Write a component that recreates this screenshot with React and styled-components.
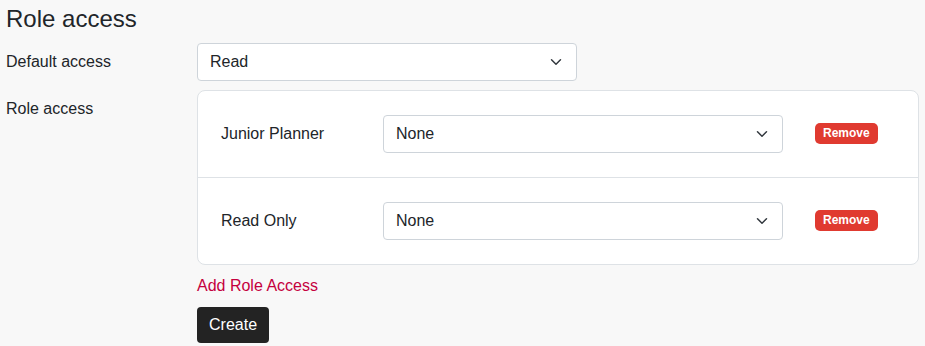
import React from 'react'
import styled, { createGlobalStyle } from 'styled-components'

const Global = createGlobalStyle`
    html, body {
        margin: 0;
        background: #f8f8f8;
    }
    body {
        font-family: "Liberation Sans", Arial, sans-serif;
        font-size: 16px;
        line-height: 1.5;
        color: #212529;
    }
`

const Page = styled.div`
    padding: 5px 7px 0 6px;
`

const Title = styled.h2`
    margin: 0 0 9px;
    font-size: 24px;
    font-weight: 400;
    line-height: 1.2;
`

const FormRow = styled.div`
    display: flex;
    align-items: flex-start;
    margin-bottom: ${p => p.gap || 0}px;
`

const Label = styled.label`
    width: 191px;
    flex: none;
    padding-top: 7px;
    line-height: 24px;
`

const chevron = `url("data:image/svg+xml,%3csvg xmlns='http://www.w3.org/2000/svg' viewBox='0 0 16 16'%3e%3cpath fill='none' stroke='%23343a40' stroke-linecap='round' stroke-linejoin='round' stroke-width='2' d='m2 5 6 6 6-6'/%3e%3c/svg%3e")`

const Select = styled.select`
    appearance: none;
    display: block;
    width: ${p => p.w}px;
    height: 38px;
    box-sizing: border-box;
    padding: 6px 36px 6px 12px;
    font-family: inherit;
    font-size: 16px;
    line-height: 24px;
    color: #212529;
    background-color: #fff;
    background-image: ${chevron};
    background-repeat: no-repeat;
    background-position: right 12px center;
    background-size: 16px 12px;
    border: 1px solid #ced4da;
    border-radius: 4px;
    flex: none;
`

const Card = styled.div`
    width: 722px;
    box-sizing: border-box;
    background: #fff;
    border: 1px solid #dee2e6;
    border-radius: 8px;
    margin-bottom: 9px;
`

const RoleRow = styled.div`
    display: flex;
    align-items: center;
    padding: 24px 23px;
    & + & {
        border-top: 1px solid #dee2e6;
    }
`

const RoleName = styled.span`
    width: 162px;
    flex: none;
`

const Badge = styled.button`
    margin-left: 32px;
    border: 0;
    padding: 4px 8px 5px;
    font-family: inherit;
    font-size: 12px;
    font-weight: 700;
    line-height: 12px;
    color: #fff;
    background: #e03a30;
    border-radius: 5px;
    cursor: pointer;
`

const AddLink = styled.a`
    display: block;
    color: #c5003e;
    text-decoration: none;
    line-height: 24px;
    margin-bottom: 9px;
    cursor: pointer;
`

const Button = styled.button`
    font-family: inherit;
    font-size: 16px;
    line-height: 24px;
    padding: 6px 12px;
    color: #fff;
    background: #232323;
    border: 0;
    border-radius: 4px;
`

const roles = ['Junior Planner', 'Read Only']

export default function App() {
    return (
        <Page>
            <Global />
            <Title>Role access</Title>

            <FormRow gap={9}>
                <Label>Default access</Label>
                <Select w={380} defaultValue='Read'>
                    <option>None</option>
                    <option>Read</option>
                    <option>Write</option>
                </Select>
            </FormRow>

            <FormRow>
                <Label>Role access</Label>
                <div>
                    <Card>
                        {roles.map(r => (
                            <RoleRow key={r}>
                                <RoleName>{r}</RoleName>
                                <Select w={400} defaultValue='None'>
                                    <option>None</option>
                                    <option>Read</option>
                                    <option>Write</option>
                                </Select>
                                <Badge>Remove</Badge>
                            </RoleRow>
                        ))}
                    </Card>
                    <AddLink>Add Role Access</AddLink>
                    <Button>Create</Button>
                </div>
            </FormRow>
        </Page>
    )
}
